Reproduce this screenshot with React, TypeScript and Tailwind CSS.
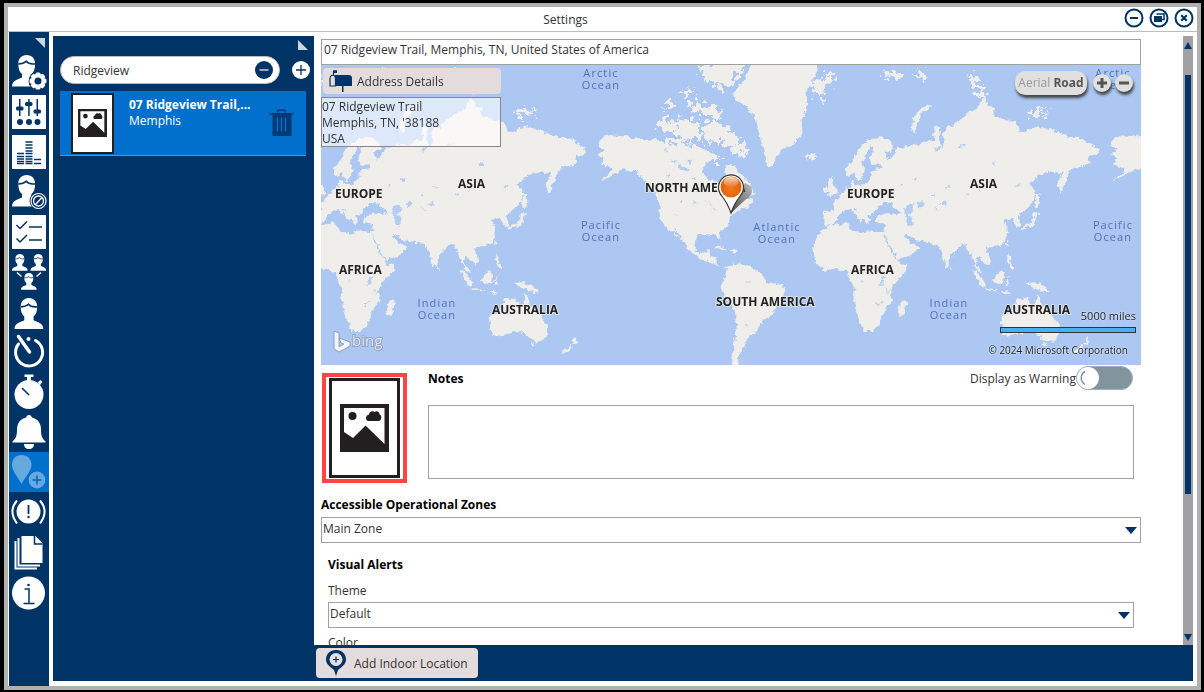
import { useState } from "react";
import type { ReactNode } from "react";

const NAVY = "#003366";

/* ---------- sidebar icons (40 x 40 tiles) ---------- */

function Person({ x = 0, y = 0, s = 1 }: { x?: number; y?: number; s?: number }) {
  return (
    <g transform={`translate(${x} ${y}) scale(${s})`}>
      <path d="M14 0c5 0 8 3.500 8 8.500 0 4.500-1 7.500-3.500 9.500v3.500c2 1.500 9.500 2 9.500 8.500H0c0-6.500 7.500-7 9.500-8.500V18C7 16 6 13 6 8.500 6 3.500 9 0 14 0z" fill="#fff" />
      <path d="M6 8.500c3 0 5 0 7.500-2.500 2 2.500 4.500 3 8.500 2.500" fill="none" stroke={NAVY} strokeWidth="1.500" />
    </g>
  );
}

function Tile({ children }: { children: ReactNode }) {
  return (
    <>
      <rect x="3" y="3" width="34" height="34" fill="#fff" />
      {children}
    </>
  );
}

const navItems: { name: string; art: ReactNode }[] = [
  {
    name: "User settings",
    art: (
      <>
        <Person x={3} y={3} s={1.05} />
        <circle cx="29" cy="29" r="9.500" fill={NAVY} />
        <g fill="#fff">
          <circle cx="29" cy="29" r="7" />
          {[0, 45, 90, 135].map((a) => (
            <rect key={a} x="26.500" y="20.500" width="5" height="17" rx="1.500" transform={`rotate(${a} 29 29)`} />
          ))}
        </g>
        <circle cx="29" cy="29" r="3.500" fill={NAVY} />
      </>
    ),
  },
  {
    name: "Controls",
    art: (
      <Tile>
        <g fill={NAVY}>
          <path d="M10 7h1.500v17H10zM19.200 7h1.500v17h-1.500zM27.500 7H29v17h-1.500z" />
          <rect x="7" y="14.500" width="7.500" height="4" rx="1.500" />
          <rect x="16" y="10" width="7.500" height="4" rx="1.500" />
          <rect x="24.500" y="17.500" width="7.500" height="4" rx="1.500" />
          <circle cx="11" cy="30" r="3" />
          <circle cx="20" cy="30" r="3" />
          <circle cx="28.500" cy="30" r="3" />
        </g>
      </Tile>
    ),
  },
  {
    name: "Statistics",
    art: (
      <Tile>
        <g stroke={NAVY} strokeWidth="1.500">
          {[21.5, 24.5, 27, 29.5, 31.5].map((y) => (
            <path key={y} d={`M8 ${y}h7`} />
          ))}
          {[10, 13, 16, 19, 21.5, 24.5, 27, 29.5, 31.5].map((y) => (
            <path key={y} d={`M16.500 ${y}h7`} />
          ))}
          {[27.5, 31.5].map((y) => (
            <path key={y} d={`M25 ${y}h7`} />
          ))}
        </g>
      </Tile>
    ),
  },
  {
    name: "Blocked users",
    art: (
      <>
        <Person x={3} y={3} s={1.05} />
        <circle cx="29.500" cy="29" r="9" fill={NAVY} />
        <circle cx="29.500" cy="29" r="7.500" fill="none" stroke="#fff" strokeWidth="1.200" />
        <circle cx="29.500" cy="29" r="5" fill="none" stroke="#fff" strokeWidth="1.300" />
        <path d="M26.500 32.500l6-6.500" stroke="#fff" strokeWidth="1.300" />
      </>
    ),
  },
  {
    name: "Checklists",
    art: (
      <Tile>
        <path d="M7.500 13l3.500 3.500 7-7M7.500 26.500l3.500 3.500 7-7M20 15h13M20 28h13" fill="none" stroke={NAVY} strokeWidth="1.500" />
      </Tile>
    ),
  },
  {
    name: "Groups",
    art: (
      <>
        <Person x={3} y={2} s={0.56} />
        <Person x={21.500} y={2} s={0.56} />
        <Person x={12} y={21} s={0.56} />
        <path d="M8 20.500l4.500 4M32 20.500l-4.500 4" stroke="#fff" strokeWidth="1.500" />
      </>
    ),
  },
  { name: "Users", art: <Person x={5.500} y={6} s={1.03} /> },
  {
    name: "Timer",
    art: (
      <>
        <path d="M9.500 12a13.500 13.500 0 1 0 17-3.500" fill="none" stroke="#fff" strokeWidth="3" strokeLinecap="round" />
        <path d="M9.500 4.500l11 15.500" stroke="#fff" strokeWidth="3.500" strokeLinecap="round" />
        <circle cx="19.500" cy="7" r="2" fill="#fff" />
      </>
    ),
  },
  {
    name: "Stopwatch",
    art: (
      <>
        <path d="M15.500 2.500h9v2.500h-2.500v4h-4V5h-2.500zM28.500 10.500l3-2.500 2 2-2.500 3z" fill="#fff" />
        <circle cx="20" cy="22.500" r="14.500" fill="#fff" />
        <path d="M13 16l7 7" stroke={NAVY} strokeWidth="1.600" />
      </>
    ),
  },
  {
    name: "Notifications",
    art: (
      <path d="M20 3c2 0 2.500 1.500 3 2.500 6 1.500 9 6 9 12 0 6 1 9 4.500 12v1h-33v-1C7 26.500 8 23.500 8 17.500c0-6 3-10.500 9-12 .5-1 1-2.500 3-2.500zM15 32h10c0 3-2 5-5 5s-5-2-5-5z" fill="#fff" />
    ),
  },
  {
    name: "Locations",
    art: (
      <>
        <path d="M12.500 3c6 0 10 4 10 10 0 6-6.500 12-10 19C9 25 3 19 3 13 3 7 6.500 3 12.500 3z" fill="#66a9de" />
        <circle cx="28" cy="28" r="9" fill="#66a9de" stroke="#0070cc" strokeWidth="1.200" />
        <path d="M28 23.500v9M23.500 28h9" stroke="#0065ba" strokeWidth="1.500" />
      </>
    ),
  },
  {
    name: "Alerts",
    art: (
      <>
        <circle cx="19.500" cy="19.500" r="12" fill="#fff" />
        <path d="M8 8.500c-6 7-6 15 0 23M31 8.500c6 7 6 15 0 23" fill="none" stroke="#fff" strokeWidth="2" />
        <path d="M19.500 13v9" stroke={NAVY} strokeWidth="1.800" />
        <circle cx="19.500" cy="25" r="1.200" fill={NAVY} />
      </>
    ),
  },
  {
    name: "Documents",
    art: (
      <>
        <path d="M6.500 9v27.500H28M9.500 6v27.500H31" fill="none" stroke="#fff" strokeWidth="2" />
        <path d="M12.500 4h14l7 7v20h-21z" fill="#fff" />
        <path d="M25.500 4v8h8" fill="none" stroke={NAVY} strokeWidth="1.500" />
      </>
    ),
  },
  {
    name: "Information",
    art: (
      <>
        <circle cx="19.500" cy="21" r="16.500" fill="#fff" />
        <path d="M15.500 17h4.500V31M14.500 31.500h11" fill="none" stroke={NAVY} strokeWidth="1.500" />
        <circle cx="19.500" cy="13" r="1.300" fill={NAVY} />
      </>
    ),
  },
];

/* ---------- picture placeholder ---------- */

function Picture({ className }: { className: string }) {
  return (
    <svg viewBox="0 0 49 48" className={className} aria-hidden="true">
      <path d="M0 0h49v48H0zM4 4v24l9 6L25.500 21.500 44.500 40V4z" fill="#231f20" fillRule="evenodd" />
      <circle cx="12.500" cy="12" r="4" fill="#231f20" />
      <path d="M28 17c-3-1-2.500-6 1-6.500 0-3 4-4 5.500-2.500 2-2 5.500 0 5 2.500 2.500.5 2.500 5.500-.5 6.500z" fill="#231f20" />
    </svg>
  );
}

/* ---------- map ---------- */

const land: string[] = [
  // Europe and Asia
  "M4 575L6 541 39 541 30 520 49 505 69 480 84 468 89 448 100 452 100 465 134 460 149 437 147 422 178 412 178 402 152 404 144 388 152 366 156 350 146 348 132 372 118 398 128 420 113 456 102 442 96 428 80 440 70 428 69 412 94 390 108 360 128 338 150 326 172 318 205 335 214 352 206 362 190 362 198 388 214 376 228 350 245 354 268 340 290 344 318 330 336 332 338 285 354 290 352 330 360 352 368 340 362 310 374 290 390 290 409 270 436 250 464 235 484 200 496 226 519 230 514 255 554 270 584 275 594 305 620 302 644 288 694 300 734 318 784 325 824 355 832 366 815 374 794 384 804 398 764 410 745 422 730 460 715 490 705 462 722 428 680 425 650 435 620 462 640 482 635 515 605 545 588 556 598 584 583 590 572 562 545 568 558 602 548 636 515 650 490 652 506 682 500 705 484 696 466 678 462 694 480 728 470 726 454 692 442 662 430 640 412 648 387 676 377 712 364 692 353 650 335 642 322 636 280 630 250 608 246 618 262 635 292 650 270 674 230 690 206 652 185 612 188 600 186 580 160 576 164 558 198 548 222 552 238 546 218 534 206 528 212 518 190 516 168 528 158 548 138 556 148 572 135 582 118 556 95 530 100 540 126 560 116 574 108 560 84 535 68 542 52 556 44 572 30 582 10 585z",
  // Africa
  "M24 585L79 578 87 600 130 612 136 600 190 606 185 618 206 662 226 690 232 704 258 700 250 722 215 762 205 780 212 810 194 830 184 850 174 882 150 902 125 902 116 880 100 832 94 800 100 780 84 755 79 726 60 720 34 715 9 725 -21 695 -26 650 -14 615z",
  // Madagascar, Sri Lanka
  "M250 805l6 14-14 38-10-3-4-18 8-18zM383 706l7 10-5 5z",
  // British Isles, Iceland
  "M18 445l14-2 2 18 14 24-10 10-24 3 9-12-8-8 4-10zM4 475l10-8 4 14-12 8zM-51 378l20-10 14 6-6 12-22 4z",
  // Novaya Zemlya
  "M280 310l-12-8 6-36 18-26 36-18-4 10-28 20-12 30z",
  // Sakhalin and Japan
  "M642 488l8 0 2 32-8 16-6-6zM634 545l18 4-8 10-14-2zM644 560l-4 20-16 10-22 4 2-8 18-6 14-22zM596 588l10 4-4 8zM556 632l4 2-4 12-4-4z",
  // South-east Asia
  "M450 718l12 4 28 34-4 16-12-8zM490 774l32 2 0 4-30-2zM538 722l8 8-2 28-22 4-12-14zM556 740l14-4-14 8 4 8 6 16-8-8-4 8zM556 668l10 12-4 14 14 16 0 10-12-6-8-24zM612 758l26-2 20 4 30 26-24-2-26-10-18-8zM536 782l14 0 14 4-10 6z",
  // Australia and New Zealand
  "M580 818l8-14 16 2 16-6-4 16 22 8 8-34 8 8 6 26 12 12 20 22 18 22 2 24-10 22-10 8-18-2-16-10-8-8-14-8-16-2-30 8-30 6-16-6-6-40 2-14 28-14zM660 938l16 2-8 12zM796 920l6 10-4 14-12-2 4-10zM784 940l-4 16-20 14-6-4z",
  // North America
  "M870 350L866 336 890 315 945 318 1000 330 1040 325 1070 340 1105 350 1140 355 1170 350 1200 365 1212 385 1190 395 1175 425 1196 446 1222 456 1242 470 1248 442 1245 405 1270 405 1290 430 1320 460 1335 490 1308 504 1335 510 1310 530 1275 545 1260 562 1255 585 1225 608 1235 632 1224 618 1190 612 1160 618 1156 655 1170 672 1190 665 1200 655 1198 680 1220 684 1220 702 1235 710 1260 706 1255 716 1210 700 1170 685 1135 660 1115 620 1088 588 1108 626 1098 616 1050 570 1048 515 1035 490 1005 455 980 425 940 416 915 430 890 444 868 456 900 430 908 414 872 402 884 384 866 372 884 362z",
  // South America
  "M1250 718L1258 708 1280 700 1320 710 1355 730 1366 754 1420 765 1425 790 1400 825 1388 850 1360 870 1340 905 1312 925 1302 950 1284 980 1286 1010 1265 1010 1270 960 1278 880 1275 842 1240 792 1232 770 1245 740z",
  // Caribbean
  "M1206 652l20-6 30 10-20 0zM1262 660l18-2 4 4-14 6z",
  // Greenland
  "M1325 100L1510 100 1524 118 1490 180 1492 230 1475 270 1478 310 1448 344 1415 360 1400 378 1386 412 1370 405 1360 360 1346 300 1336 260 1305 228 1275 206 1270 190 1300 150z",
];

const arctic: string[] = [
  // Canadian archipelago
  "M1170 125l20-30 80-8 46 4-26 40-30 26-30 20-24-8 0-22-18 8zM1130 232l30-24 30 18 44 12-4 22-46 0zM1110 186l20-14 18 16-22 14zM1058 228l20-28 16 14-10 20zM1046 290l4-30 34 12 20 14-6 22-24-4-18 8zM1096 304l14-36 38-4 24 20-8 24 8 20-34 6-24-8zM1178 304l14-34 40 0 24 30 28 20 30 40-12 16-30-8-20-26-32-12-14 2-14 14zM1196 380l24-8 18 16-26 12zM1062 345l34-14 50 14 26 10-30 20-60-8z",
  // Siberian islands and Svalbard
  "M442 124l12 6 10 22 16 12 10 28-12 4-26-30-10-20zM626 238l32-6 2 22-30 4zM662 236l22 6-6 14zM-44 158l24-8 36-16 28 12-30 14-14 16 6 24-12 10-18-26zM184 132l24-10 38 6-16 14-26 0zM268 132l52-8-14 20-30 0z",
];

const lakes: string[] = [
  "M246 538l10-14 16 0 0 22-12 6 12 14 0 18-16-4-6-24z",
  "M290 518l10-6 4 12-12 10zM376 520l-24 6 16-14zM505 398l14-8 2 18-12-2zM480 478l-10 8 10-14zM364 468h24l-8 4zM580 468l16-4-6 8zM332 498l6-8 2 8zM178 742l10-4-4 24-12 6zM196 780l4-4-2 24zM162 822l22-10-20 16zM336 352l20-6-14 20zM410 344l26-6-20 12zM116 752l8-2-4 8zM270 448l16-8-8 14zM236 462l8 4-8 6zM334 528l14 14-8-2zM432 488l14 4-10 6z",
  "M1080 386l26 8-12 8zM1110 400l28 18-14 6-22-14zM1060 352l10 4 0 14zM1132 384l14 10-6 12zM1180 505l26 18 6 22-8-10 12-2 4 14-16-22zM1150 504l8 14-6 6zM1095 552l10 2-8 6zM1312 750l10 4-10 4zM1306 880l6 6-8 2zM1108 516l10-6-4 8zM1070 430l12 4-8 6zM1150 440l10 8-12 0z",
];

const continents: [string, number, number][] = [
  ["EUROPE", 14, 133],
  ["ASIA", 137, 123],
  ["AFRICA", 18, 209],
  ["AUSTRALIA", 171, 249],
  ["NORTH AMERICA", 324, 127],
  ["SOUTH AMERICA", 395, 241],
  ["EUROPE", 526, 133],
  ["ASIA", 649, 123],
  ["AFRICA", 530, 209],
  ["AUSTRALIA", 683, 249],
];

const oceans: [string, number, number][] = [
  ["Arctic", 280, 12],
  ["Pacific", 280, 164],
  ["Atlantic", 456, 166],
  ["Indian", 116, 242],
  ["Arctic", 792, 12],
  ["Pacific", 792, 164],
  ["Indian", 628, 242],
];

const WORLD_OFFSETS = [-512, 0, 512, 1024];

function WorldMap() {
  return (
    <svg className="block h-[300px] w-full bg-[#abc7f2]" role="img" aria-label="World map">
      <defs>
        <filter id="coast" x="0" y="0" width="100%" height="100%">
          <feTurbulence type="fractalNoise" baseFrequency="0.22" numOctaves="3" seed="4" result="n" />
          <feDisplacementMap in="SourceGraphic" in2="n" scale="6" xChannelSelector="R" yChannelSelector="G" />
        </filter>
        <filter id="islands" x="0" y="0" width="100%" height="100%">
          <feTurbulence type="fractalNoise" baseFrequency="0.18" numOctaves="3" seed="9" result="n" />
          <feDisplacementMap in="SourceGraphic" in2="n" scale="22" xChannelSelector="R" yChannelSelector="G" />
        </filter>
        <g id="mainland" transform="scale(0.3333) translate(-33 -104)">
          {land.map((d) => (
            <path key={d} d={d} fill="#efeeea" />
          ))}
          {lakes.map((d) => (
            <path key={d} d={d} fill="#b5cdf1" />
          ))}
        </g>
        <g id="arctic" transform="scale(0.3333) translate(-33 -104)">
          {arctic.map((d) => (
            <path key={d} d={d} fill="#efeeea" />
          ))}
        </g>
        <linearGradient id="shade" x1="0" y1="1" x2="1" y2="0">
          <stop offset="0" stopColor="#333" stopOpacity="0.900" />
          <stop offset="1" stopColor="#666" stopOpacity="0.400" />
        </linearGradient>
        <radialGradient id="pin" cx="0.5" cy="0.600" r="0.600">
          <stop offset="0" stopColor="#f47a1c" />
          <stop offset="1" stopColor="#dc5c08" />
        </radialGradient>
        <linearGradient id="gloss" x1="0" y1="0" x2="0" y2="1">
          <stop offset="0" stopColor="#fff" stopOpacity="0.750" />
          <stop offset="1" stopColor="#fff" stopOpacity="0.050" />
        </linearGradient>
      </defs>
      <g filter="url(#coast)">
        <rect width="100%" height="300" fill="#abc7f2" />
        {WORLD_OFFSETS.map((x) => (
          <use key={x} href="#mainland" x={x} />
        ))}
      </g>
      <g filter="url(#islands)">
        <rect width="100%" height="300" fill="transparent" />
        {WORLD_OFFSETS.map((x) => (
          <use key={x} href="#arctic" x={x} />
        ))}
      </g>
      <g className="text-[11px] tracking-widest" fill="#5470b8">
        {oceans.map(([name, x, y]) => (
          <text key={`${name}${x}`} x={x} y={y} textAnchor="middle">
            <tspan x={x}>{name}</tspan>
            <tspan x={x} dy="12">
              Ocean
            </tspan>
          </text>
        ))}
      </g>
      <g className="text-[12px] font-bold" fill="#222" stroke="#efeeea" strokeWidth="2" strokeOpacity="0.600" paintOrder="stroke">
        {continents.map(([name, x, y]) => (
          <text key={`${name}${x}`} x={x} y={y}>
            {name}
          </text>
        ))}
      </g>
      <path d="M410 148l6-16c3-6 6-10 8-14 4 2 7 4 7 8 0 4-4 7-8 10z" fill="url(#shade)" />
      <path d="M410 148c-3-9-6-13-9.500-17.500a12.500 12.500 0 1 1 19 0C416 135 413 139 410 148z" fill="#fff" stroke="#333" strokeWidth="1.200" />
      <circle cx="410" cy="122" r="10.500" fill="url(#pin)" />
      <ellipse cx="410" cy="117" rx="7.500" ry="5" fill="url(#gloss)" />
      <g opacity="0.850">
        <path d="M13 266l5 2v14l5-3-3-1-2-5 11 4v4l-11 6-5-3z" fill="#fff" stroke="#8a9ab5" strokeWidth="1" />
        <text x="31" y="281" className="text-[15px]" fill="#eee" stroke="#8290a8" strokeWidth="1.500" paintOrder="stroke">
          bing
        </text>
      </g>
    </svg>
  );
}

/* ---------- shared form pieces ---------- */

function SelectBox({ id, value }: { id: string; value: string }) {
  return (
    <div className="relative">
      <select id={id} defaultValue={value} className="block h-[26px] w-full appearance-none border border-[#a0a0a0] bg-white px-px pb-0.5 text-[12px] text-[#333] outline-none">
        <option>{value}</option>
      </select>
      <svg width="12" height="7" className="pointer-events-none absolute top-2.5 right-1" aria-hidden="true">
        <path d="M0 0h12L6 7z" fill={NAVY} />
      </svg>
    </div>
  );
}

function WindowButton({ name, children }: { name: string; children: ReactNode }) {
  return (
    <button aria-label={name} className="h-5 w-5">
      <svg viewBox="0 0 20 20" className="block h-5 w-5">
        <circle cx="10" cy="10" r="8.500" fill="#fff" stroke={NAVY} strokeWidth="2" />
        {children}
      </svg>
    </button>
  );
}

export default function App() {
  const [query, setQuery] = useState("Ridgeview");
  const [address, setAddress] = useState("07 Ridgeview Trail, Memphis, TN, United States of America");
  const [notes, setNotes] = useState("");
  const [warn, setWarn] = useState(false);

  return (
    <div className="h-screen bg-black pt-[3px] pr-[3px] pb-0.5 pl-1 font-['Open_Sans','Noto_Sans',sans-serif] text-[12px] text-[#333]">
      <div className="flex h-full flex-col border-4 border-[#b0b0b0] bg-white">
        <header className="flex h-[25px] shrink-0 items-center border-b border-[#bdbdbd] pr-[3px]">
          <div className="w-20" />
          <h1 className="flex-1 pt-0.5 pr-[81px] text-center">Settings</h1>
          <div className="flex gap-[5px] pb-0.5">
            <WindowButton name="Minimize">
              <path d="M6 10h8" stroke={NAVY} strokeWidth="2" />
            </WindowButton>
            <WindowButton name="Restore">
              <path d="M7.500 6H15v5.500h-2" fill="none" stroke={NAVY} strokeWidth="1.500" />
              <rect x="5" y="8" width="8" height="6" fill={NAVY} />
            </WindowButton>
            <WindowButton name="Close">
              <path d="M7.200 7.200l5.600 5.600M12.800 7.200l-5.600 5.600" stroke={NAVY} strokeWidth="2.200" />
            </WindowButton>
          </div>
        </header>

        <div className="flex min-h-0 flex-1 pl-px">
          <nav aria-label="Sections" className="flex w-10 shrink-0 flex-col bg-[#003366]">
            <div className="flex h-5 justify-end p-1 pt-1.5">
              <svg width="10" height="10" aria-hidden="true">
                <path d="M0 0h10v10z" fill="#ccd6e0" />
              </svg>
            </div>
            {navItems.map((item) => (
              <button key={item.name} aria-label={item.name} className={item.name === "Locations" ? "h-10 w-10 shrink-0 bg-[#0070cc]" : "h-10 w-10 shrink-0"}>
                <svg viewBox="0 0 40 40" className="block h-10 w-10">
                  {item.art}
                </svg>
              </button>
            ))}
          </nav>

          <div className="flex min-w-0 flex-1 pt-1 pr-1 pb-[5px] pl-1">
            <aside className="w-[261px] shrink-0 bg-[#003366]">
              <div className="flex h-5 justify-end px-1.5 pt-1">
                <svg width="10" height="10" aria-hidden="true">
                  <path d="M0 0v10h10z" fill="#ccd6e0" />
                </svg>
              </div>
              <div className="flex items-center gap-3 pr-1 pl-[7px]">
                <div className="flex h-7 w-[220px] items-center rounded-full border border-[#bbb] bg-white pr-1.5 pl-3">
                  <input aria-label="Search locations" value={query} onChange={(e) => setQuery(e.target.value)} className="min-w-0 flex-1 pt-0.5 text-[12px] outline-none" />
                  <button aria-label="Clear search" onClick={() => setQuery("")}>
                    <svg width="18" height="18" className="block">
                      <circle cx="9" cy="9" r="9" fill={NAVY} />
                      <path d="M4.500 9h9" stroke="#fff" strokeWidth="1.200" />
                    </svg>
                  </button>
                </div>
                <button aria-label="Add location">
                  <svg width="18" height="18" className="block">
                    <circle cx="9" cy="9" r="9" fill="#fff" />
                    <path d="M4 9h10M9 4v10" stroke={NAVY} strokeWidth="1.300" />
                  </svg>
                </button>
              </div>
              <ul className="mt-[7px] mr-2 ml-[7px]">
                <li className="flex h-[65px] items-center border-b border-[#5b8fc0] bg-[#0070cc] pl-[11px] text-white">
                  <div className="flex h-[61px] w-[43px] items-center justify-center border-2 border-[#231f20] bg-white">
                    <Picture className="w-[29px]" />
                  </div>
                  <a href="#location" className="ml-[15px] flex-1 self-start pt-1.5">
                    <strong className="block leading-4">07 Ridgeview Trail,...</strong>
                    <span className="block leading-4">Memphis</span>
                  </a>
                  <button aria-label="Delete location" className="mr-3">
                    <svg width="25" height="28" viewBox="0 0 25 28" className="block" fill="#003a75">
                      <path d="M0 4h8V.500h9V4h8v1.500h-2.500V27h-19V5.500H0zM9.500 2v2h6V2z" fillRule="evenodd" />
                      <path d="M8.500 8.500v14M12.500 8.500v14M16.500 8.500v14" stroke="#0070cc" strokeWidth="1.300" />
                    </svg>
                  </button>
                </li>
              </ul>
            </aside>

            <div className="flex min-w-0 flex-1 flex-col">
              <div className="flex min-h-0 flex-1">
                <main className="min-w-0 flex-1 overflow-hidden pt-[3px] pr-[42px] pl-[7px]">
                  <input
                    aria-label="Address"
                    value={address}
                    onChange={(e) => setAddress(e.target.value)}
                    className="block h-[26px] w-full border border-[#a0a0a0] px-0.5 pb-1.5 text-[12px] outline-none"
                  />

                  <section aria-label="Map" className="relative">
                    <WorldMap />
                    <div className="absolute top-[3px] left-0 w-[180px]">
                      <button className="ml-0.5 flex h-[26px] w-[178px] items-center gap-1 rounded bg-[#e4dcdc] pl-1.5">
                        <svg width="24" height="22" viewBox="0 0 24 22" aria-hidden="true">
                          <path d="M6 5h14c2 0 3 1.500 3 3.500V16H6z" fill={NAVY} />
                          <path d="M1 16V9c0-5 5.500-5 5.500 0v7zM4.500 5V1H8" fill="none" stroke={NAVY} strokeWidth="1.200" />
                          <path d="M4.500 0.500H8v2.500H4.500zM13 16h1.500v6H13z" fill={NAVY} />
                        </svg>
                        <span className="pt-px">Address Details</span>
                      </button>
                      <address className="mt-[3px] h-[50px] border border-[#888] bg-white/60 pt-px leading-4 not-italic">
                        07 Ridgeview Trail
                        <br />
                        Memphis, TN, '38188
                        <br />
                        USA
                      </address>
                    </div>
                    <div className="absolute top-1.5 right-2 flex items-center gap-1">
                      <button className="mr-0.5 h-6 w-[72px] rounded-[10px] bg-[#e0e0e0] whitespace-nowrap text-[#999] shadow-[1px_3px_3px_#444]">
                        Aerial <strong className="text-[#555]">Road</strong>
                      </button>
                      {["Zoom in", "Zoom out"].map((name) => (
                        <button key={name} aria-label={name} className="h-[18px] w-[18px] rounded-full bg-[#e0e0e0] shadow-[1px_3px_3px_#444]">
                          <svg width="18" height="18" className="block">
                            <path d={name === "Zoom in" ? "M4 9h10M9 4v10" : "M4 9h10"} stroke="#555" strokeWidth="3" />
                          </svg>
                        </button>
                      ))}
                    </div>
                    <div className="absolute right-[5px] bottom-[7px] w-[136px] text-right text-[#222] [text-shadow:0_0_2px_white]">
                      <div className="text-[11px] leading-4">5000 miles</div>
                      <div className="mt-[3px] h-1.5 border border-[#333] bg-[#45b0f5]" />
                      <div className="mt-[9px] mr-2 -ml-4 text-[10px] leading-4 whitespace-nowrap">© 2024 Microsoft Corporation</div>
                    </div>
                  </section>

                  <section className="flex pr-[7px] pl-px">
                    <button aria-label="Change picture" className="mt-2 h-[110px] w-[85px] shrink-0 border-4 border-[#ff4444] bg-white p-px px-[3px]">
                      <span className="flex h-full items-center justify-center border-[3px] border-[#231f20]">
                        <Picture className="w-[49px]" />
                      </span>
                    </button>
                    <div className="ml-[21px] flex-1">
                      <div className="flex h-10 items-start justify-between pt-px pr-px">
                        <label htmlFor="notes" className="pt-1 font-bold text-black">
                          Notes
                        </label>
                        <label className="flex h-6 items-center">
                          <span className="pt-0.5">Display as Warning</span>
                          <input type="checkbox" checked={warn} onChange={(e) => setWarn(e.target.checked)} className="peer sr-only" />
                          <span className="flex h-6 w-[57px] rounded-full border border-[#9fb0b8] bg-[#82959e] peer-checked:justify-end">
                            <svg width="22" height="22" aria-hidden="true">
                              <circle cx="11" cy="11" r="11" fill="#fff" />
                              <path d="M8 4.500c-5 3-5 10 0 13" fill="none" stroke="#82959e" strokeWidth="1.500" />
                            </svg>
                          </span>
                        </label>
                      </div>
                      <textarea id="notes" value={notes} onChange={(e) => setNotes(e.target.value)} className="block h-[74px] w-full resize-none border border-[#a0a0a0] outline-none" />
                    </div>
                  </section>

                  <section className="mt-[14px]">
                    <label htmlFor="zones" className="block h-5 leading-4 font-bold text-black">
                      Accessible Operational Zones
                    </label>
                    <SelectBox id="zones" value="Main Zone" />
                  </section>

                  <section className="mt-3 px-[7px]">
                    <h2 className="leading-5 font-bold text-black">Visual Alerts</h2>
                    <label htmlFor="theme" className="mt-1.5 block h-[21px] leading-5">
                      Theme
                    </label>
                    <SelectBox id="theme" value="Default" />
                    <div className="mt-[5px] leading-5">Color</div>
                  </section>
                </main>

                <div className="flex w-2.5 flex-col items-center bg-[#a0a0a6] pt-1.5 pb-1" aria-hidden="true">
                  <svg width="8" height="7">
                    <path d="M0 7h8L4 0z" fill={NAVY} />
                  </svg>
                  <div className="flex min-h-0 w-1.5 flex-1 flex-col pt-[26px]">
                    <div className="h-[75%] bg-[#003366]" />
                  </div>
                  <svg width="8" height="7">
                    <path d="M0 0h8L4 7z" fill={NAVY} />
                  </svg>
                </div>
              </div>

              <footer className="flex h-9 shrink-0 items-center bg-[#003366] pl-0.5">
                <button className="flex h-[30px] items-center gap-2 rounded bg-[#e4dcdc] pr-2.5 pl-2.5">
                  <svg width="20" height="26" viewBox="0 0 20 26" aria-hidden="true">
                    <path d="M10 0c6 0 10 4 10 9.500S14 18 12 20l-2 6-2-6C6 18 0 15 0 9.500S4 0 10 0z" fill={NAVY} />
                    <circle cx="10" cy="9.500" r="6.500" fill="#e8e0e0" />
                    <path d="M7 9.500h6M10 6.500v6" stroke={NAVY} strokeWidth="1.200" />
                  </svg>
                  <span className="pt-0.5">Add Indoor Location</span>
                </button>
              </footer>
            </div>
          </div>
        </div>
      </div>
    </div>
  );
}
